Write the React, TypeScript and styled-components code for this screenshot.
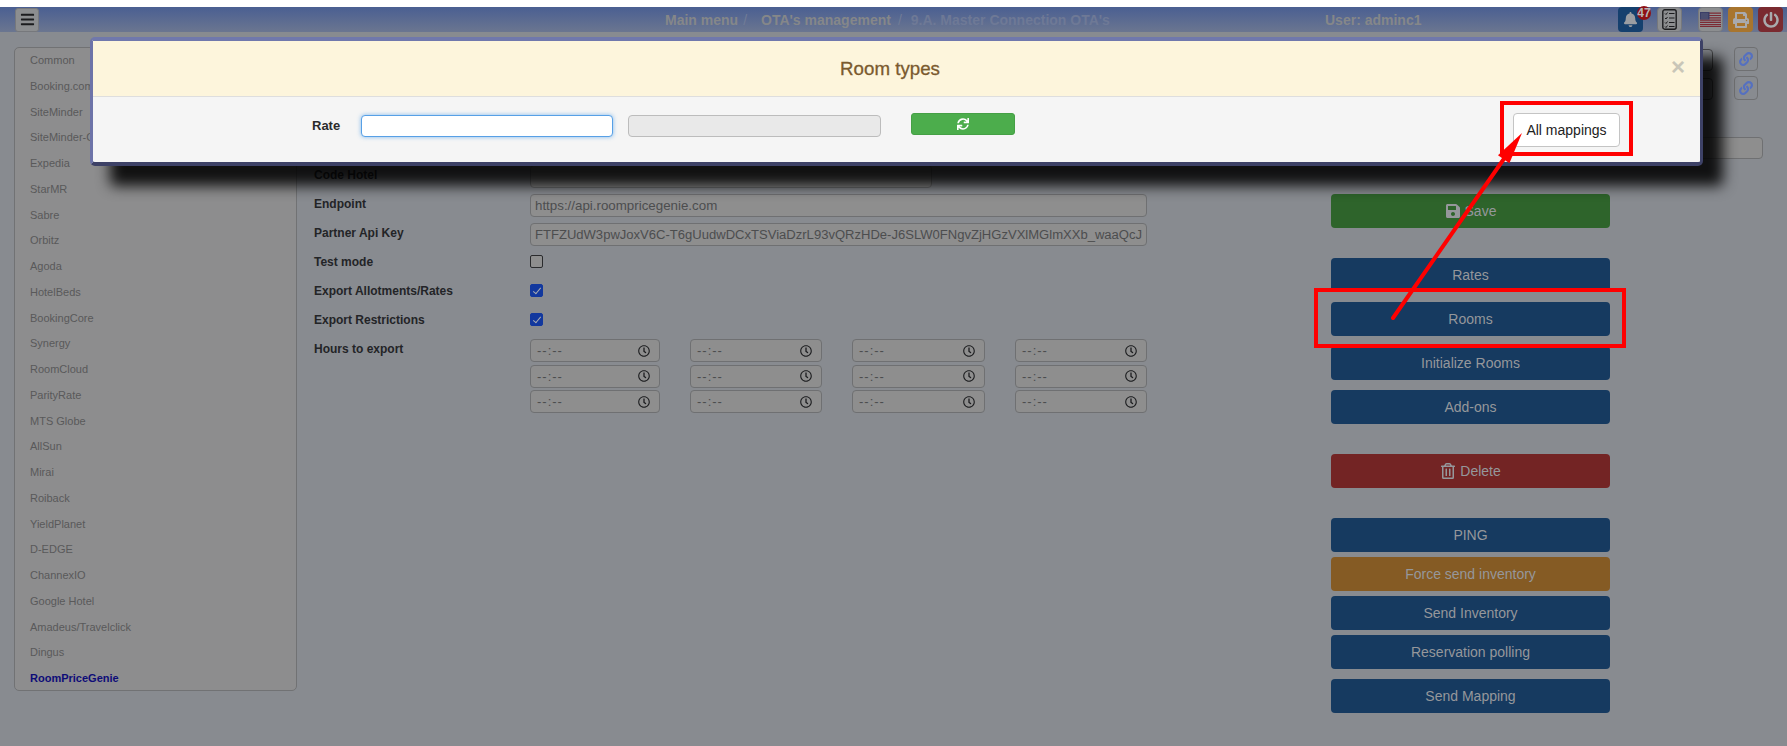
import React from 'react';
import styled, { createGlobalStyle } from 'styled-components';
import {
  FaBars,
  FaBell,
  FaLink,
  FaPowerOff,
  FaPrint,
  FaRegClock,
  FaRegTrashAlt,
  FaSave,
  FaSync,
} from 'react-icons/fa';

const CHANNELS = [
  'Common',
  'Booking.com',
  'SiteMinder',
  'SiteMinder-C',
  'Expedia',
  'StarMR',
  'Sabre',
  'Orbitz',
  'Agoda',
  'HotelBeds',
  'BookingCore',
  'Synergy',
  'RoomCloud',
  'ParityRate',
  'MTS Globe',
  'AllSun',
  'Mirai',
  'Roiback',
  'YieldPlanet',
  'D-EDGE',
  'ChannexIO',
  'Google Hotel',
  'Amadeus/Travelclick',
  'Dingus',
  'RoomPriceGenie',
];

const API_KEY =
  'FTFZUdW3pwJoxV6C-T6gUudwDCxTSViaDzrL93vQRzHDe-J6SLW0FNgvZjHGzVXlMGlmXXb_waaQcJvN2kPq';

export default function App() {
  return (
    <Page>
      <GlobalStyle />
      <TopStrip />
      <Header>
        <HeaderLeft>
          <MenuButton>
            <FaBars size={15} />
          </MenuButton>
        </HeaderLeft>
        <Breadcrumb>
          <span>Main menu</span>
          <FirstSlash>/</FirstSlash>
          <span>OTA's management</span>
          <SecondSlash>/</SecondSlash>
          <CrumbCurrent>9.A. Master Connection OTA's</CrumbCurrent>
        </Breadcrumb>
        <UserName>User: adminc1</UserName>
        <HeaderIcons>
          <BellButton>
            <FaBell size={15} />
            <Badge>47</Badge>
          </BellButton>
          <ListButton>
            <svg width="15" height="21" viewBox="0 0 15 21" fill="none" stroke="#1b1c1e">
              <rect x="0.8" y="0.8" width="13.4" height="19.4" rx="2" strokeWidth="1.4" />
              <path d="M3 4.5l1 1 1.5-2M3 9l1 1 1.5-2M3 13.5l1 1 1.5-2M3 17.5l1 1 1.5-2" strokeWidth="1" />
              <path d="M7 4.5h5.5M7 9h5.5M7 13.5h5.5M7 17.5h5.5" strokeWidth="1.2" />
            </svg>
          </ListButton>
          <FlagButton>
            <svg width="21" height="15" viewBox="0 0 21 15">
              <rect width="21" height="15" fill="#8f9094" />
              <path d="M0 1.2h21M0 3.5h21M0 5.8h21M0 8.1h21M0 10.4h21M0 12.7h21M0 14.6h21" stroke="#7c2a33" strokeWidth="1.2" />
              <rect width="9.5" height="7.5" fill="#3a3f68" />
              <path d="M1.5 2h6.5M1.5 4h6.5M1.5 6h6.5" stroke="#8f9094" strokeWidth="0.8" strokeDasharray="1 1" />
            </svg>
          </FlagButton>
          <PrintButton>
            <FaPrint size={16} />
          </PrintButton>
          <PowerButton>
            <FaPowerOff size={16} />
          </PowerButton>
        </HeaderIcons>
      </Header>

      <Content>
        <Sidebar>
          {CHANNELS.map((name) => (
            <ChannelItem key={name} $active={name === 'RoomPriceGenie'}>
              {name}
            </ChannelItem>
          ))}
        </Sidebar>

        <FormGrid>
          <FieldLabel>Code Hotel</FieldLabel>
          <FieldInput $short readOnly value="" />
          <FieldLabel>Endpoint</FieldLabel>
          <FieldInput readOnly value="https://api.roompricegenie.com" />
          <FieldLabel>Partner Api Key</FieldLabel>
          <KeyInput readOnly value={API_KEY} />
          <FieldLabel>Test mode</FieldLabel>
          <FieldCheck />
          <FieldLabel>Export Allotments/Rates</FieldLabel>
          <FieldCheck $checked>
            <CheckMark />
          </FieldCheck>
          <FieldLabel>Export Restrictions</FieldLabel>
          <FieldCheck $checked>
            <CheckMark />
          </FieldCheck>
          <FieldLabel>Hours to export</FieldLabel>
          <HoursGrid>
            {Array.from({ length: 12 }, (_, i) => (
              <TimeField key={i}>
                <span>--:--</span>
                <FaRegClock size={12} />
              </TimeField>
            ))}
          </HoursGrid>
        </FormGrid>

        <ActionsColumn>
          <LinkRow>
            <ShadowInput />
            <LinkButton>
              <FaLink size={14} />
            </LinkButton>
          </LinkRow>
          <LinkRow>
            <ShadowInput />
            <LinkButton>
              <FaLink size={14} />
            </LinkButton>
          </LinkRow>
          <WideInput />
          <ActionButton $color="#2e642b" $mt={35}>
            <FaSave size={16} /> Save
          </ActionButton>
          <ActionButton $mt={30}>Rates</ActionButton>
          <ActionButton $mt={10}>Rooms</ActionButton>
          <ActionButton $mt={10}>Initialize Rooms</ActionButton>
          <ActionButton $mt={10}>Add-ons</ActionButton>
          <ActionButton $color="#732424" $mt={30}>
            <FaRegTrashAlt size={16} /> Delete
          </ActionButton>
          <ActionButton $mt={30}>PING</ActionButton>
          <ActionButton $color="#855b24" $mt={5}>
            Force send inventory
          </ActionButton>
          <ActionButton $mt={5}>Send Inventory</ActionButton>
          <ActionButton $mt={5}>Reservation polling</ActionButton>
          <ActionButton $mt={10}>Send Mapping</ActionButton>
        </ActionsColumn>
      </Content>

      <Modal>
        <ModalHeader>
          <ModalTitle>Room types</ModalTitle>
          <CloseMark>×</CloseMark>
        </ModalHeader>
        <ModalBody>
          <RateLabel>Rate</RateLabel>
          <RateInput />
          <RateDisabled />
          <RefreshButton>
            <FaSync size={12} />
          </RefreshButton>
          <MappingsButton>All mappings</MappingsButton>
        </ModalBody>
      </Modal>

      <MappingsMark />
      <RoomsMark />
      <ArrowLayer width="1787" height="746" viewBox="0 0 1787 746">
        <path d="M1393 318L1508 153" stroke="#ff0000" strokeWidth="4" strokeLinecap="round" />
        <polygon points="1522,133 1509.4,163.2 1498,155.2" fill="#ff0000" />
      </ArrowLayer>
    </Page>
  );
}

const GlobalStyle = createGlobalStyle`
  html, body {
    margin: 0;
    padding: 0;
    background: #888b90;
  }
  * {
    box-sizing: border-box;
  }
`;

const Page = styled.div`
  position: relative;
  width: 1787px;
  height: 746px;
  overflow: hidden;
  background: #888b90;
  font-family: 'Liberation Sans', Arial, sans-serif;
`;

const TopStrip = styled.div`
  height: 7px;
  background: #ffffff;
`;

const Header = styled.header`
  display: flex;
  align-items: center;
  height: 25px;
  background: linear-gradient(#4a5f92, #6b7690);
  font-size: 14px;
  font-weight: bold;
  color: #858789;
`;

const HeaderLeft = styled.div`
  width: 665px;
  padding-left: 15px;
`;

const MenuButton = styled.div`
  display: flex;
  align-items: center;
  justify-content: center;
  width: 24px;
  height: 24px;
  background: #8c8e90;
  border: 1px solid #76787c;
  border-radius: 3px;
  color: #1b1c1e;
`;

const Breadcrumb = styled.nav`
  display: flex;
  width: 660px;
  white-space: nowrap;
`;

const FirstSlash = styled.span`
  margin: 0 14px 0 5px;
  font-weight: normal;
  color: #717c97;
`;

const SecondSlash = styled(FirstSlash)`
  margin: 0 9px 0 7px;
`;

const CrumbCurrent = styled.span`
  color: #6e7996;
`;

const UserName = styled.div`
  width: 293px;
`;

const HeaderIcons = styled.div`
  display: flex;
  align-items: center;
`;

const IconButton = styled.div`
  display: flex;
  align-items: center;
  justify-content: center;
  width: 25px;
  height: 25px;
  border-radius: 4px;
`;

const BellButton = styled(IconButton)`
  position: relative;
  margin-right: 14px;
  background: #15406e;
  color: #9a9da2;
`;

const Badge = styled.span`
  position: absolute;
  top: -1px;
  left: 19px;
  width: 14px;
  height: 14px;
  border-radius: 50%;
  background: #8e1116;
  color: #b6b6b8;
  font-size: 12px;
  line-height: 14px;
  text-align: center;
`;

const ListButton = styled(IconButton)`
  margin-right: 16px;
  background: #8c8e90;
  border: 1px solid #76787c;
`;

const FlagButton = styled(IconButton)`
  margin-right: 5px;
  background: #8c8e90;
  border: 1px solid #76787c;
`;

const PrintButton = styled(IconButton)`
  margin-right: 5px;
  background: #a8752e;
  color: #a9aaad;
`;

const PowerButton = styled(IconButton)`
  background: #7a2a30;
  color: #a9aaad;
`;

const Content = styled.main`
  display: flex;
  align-items: flex-start;
  padding: 15px 0 0 14px;
`;

const Sidebar = styled.aside`
  flex: none;
  width: 283px;
  height: 644px;
  background: #8d8d8e;
  border: 1px solid #717274;
  border-radius: 5px;
`;

const ChannelItem = styled.div<{ $active?: boolean }>`
  height: 25.75px;
  padding-left: 15px;
  font-size: 11px;
  line-height: 24.5px;
  font-weight: ${(p) => (p.$active ? 'bold' : 'normal')};
  color: ${(p) => (p.$active ? '#0d0c78' : '#59595a')};
`;

const FormGrid = styled.section`
  flex: none;
  display: grid;
  grid-template-columns: 216px 617px;
  grid-auto-rows: minmax(29px, auto);
  width: 1034px;
  padding: 117px 0 0 17px;
  align-items: start;
`;

const FieldLabel = styled.label`
  padding-top: 4px;
  font-size: 12px;
  line-height: 14px;
  font-weight: bold;
  color: #232427;
`;

const FieldInput = styled.input<{ $short?: boolean }>`
  display: block;
  width: ${(p) => (p.$short ? '402px' : '617px')};
  height: 23px;
  margin-top: 1px;
  padding: 0 4px;
  background: #8e8e8e;
  border: 1px solid #6f7072;
  border-radius: 4px;
  outline: none;
  font-family: inherit;
  font-size: 13.33px;
  color: #4c4d4e;
`;

const KeyInput = styled(FieldInput)`
  font-size: 13.05px;
`;

const FieldCheck = styled.div<{ $checked?: boolean }>`
  display: flex;
  align-items: center;
  justify-content: center;
  width: 13px;
  height: 13px;
  margin-top: 4px;
  border-radius: 2px;
  background: ${(p) => (p.$checked ? '#12389e' : '#8e8e8e')};
  border: 1px solid ${(p) => (p.$checked ? '#12389e' : '#2a2b2d')};
`;

const CheckMark = styled.span`
  width: 4px;
  height: 8px;
  margin-top: -2px;
  border-right: 1.5px solid #a9acb2;
  border-bottom: 1.5px solid #a9acb2;
  transform: rotate(40deg);
`;

const HoursGrid = styled.div`
  display: grid;
  grid-template-columns: 130px 132px 133px 132px;
  grid-auto-rows: 23px;
  column-gap: 30px;
  row-gap: 2.5px;
  margin-top: 1px;
`;

const TimeField = styled.div`
  display: flex;
  align-items: center;
  justify-content: space-between;
  padding: 0 9px 0 6px;
  background: #8e8e8e;
  border: 1px solid #6f7072;
  border-radius: 4px;
  font-size: 13px;
  letter-spacing: 1px;
  color: #4c4d4e;
  svg {
    color: #1d1e20;
  }
`;

const ActionsColumn = styled.section`
  flex: none;
  width: 432px;
`;

const LinkRow = styled.div`
  display: flex;
  align-items: flex-end;
  justify-content: space-between;
  width: 427px;
  height: 24px;
  margin-bottom: 5px;
`;

const ShadowInput = styled.div`
  width: 382px;
  height: 22px;
  border: 1px solid #4a4b4d;
  border-radius: 4px;
`;

const LinkButton = styled.div`
  display: flex;
  align-items: center;
  justify-content: center;
  width: 24px;
  height: 24px;
  border: 1px solid #6f7072;
  border-radius: 4px;
  color: #5570c0;
`;

const WideInput = styled.div`
  width: 432px;
  height: 22px;
  margin-top: 37px;
  background: #8e8e8e;
  border: 1px solid #6f7072;
  border-radius: 4px;
`;

const ActionButton = styled.div<{ $color?: string; $mt: number }>`
  display: flex;
  align-items: center;
  justify-content: center;
  gap: 4px;
  width: 279px;
  height: 34px;
  margin-top: ${(p) => p.$mt}px;
  background: ${(p) => p.$color ?? '#163a60'};
  border-radius: 4px;
  font-size: 14px;
  color: #95979b;
`;

const Modal = styled.div`
  position: absolute;
  top: 37px;
  left: 90px;
  width: 1613px;
  height: 129px;
  background: #f5f5f5;
  border-style: solid;
  border-width: 4px 3px 4px 3px;
  border-color: #7078ac #3d4166 #3d4166 #6d73a8;
  border-radius: 5px;
  box-shadow: 20px 20px 14px rgba(0, 0, 0, 0.88);
`;

const ModalHeader = styled.div`
  position: relative;
  height: 56px;
  padding-right: 13px;
  background: #fdf5dc;
  border-bottom: 1px solid #dedede;
  text-align: center;
`;

const ModalTitle = styled.h3`
  margin: 0;
  font-size: 18.72px;
  font-weight: normal;
  line-height: 56px;
  color: #7a5a2e;
  -webkit-text-stroke: 0.3px #7a5a2e;
`;

const CloseMark = styled.span`
  position: absolute;
  top: 9px;
  right: 15px;
  font-size: 24px;
  font-weight: bold;
  line-height: 34px;
  color: #c9c6b8;
`;

const ModalBody = styled.div`
  display: flex;
  align-items: flex-start;
  padding: 16px 0 0 219px;
`;

const RateLabel = styled.label`
  width: 49px;
  margin-top: 5px;
  font-size: 13px;
  line-height: 15px;
  font-weight: bold;
  color: #2b2b2b;
`;

const RateInput = styled.div`
  width: 252px;
  height: 22px;
  margin-top: 2px;
  background: #ffffff;
  border: 1px solid #57a0e6;
  border-radius: 4px;
  box-shadow: 0 0 4px rgba(80, 160, 235, 0.7);
`;

const RateDisabled = styled.div`
  width: 253px;
  height: 22px;
  margin: 2px 30px 0 15px;
  background: #e9e9e9;
  border: 1px solid #bcbcbc;
  border-radius: 4px;
`;

const RefreshButton = styled.div`
  display: flex;
  align-items: center;
  justify-content: center;
  width: 104px;
  height: 22px;
  background: #4cad4c;
  border: 1px solid #45a045;
  border-radius: 3px;
  color: #ffffff;
`;

const MappingsButton = styled.div`
  display: flex;
  align-items: center;
  justify-content: center;
  width: 107px;
  height: 34px;
  margin-left: 498px;
  background: #ffffff;
  border: 1px solid #c4c4c4;
  border-radius: 4px;
  font-size: 14px;
  color: #222222;
`;

const MappingsMark = styled.div`
  position: absolute;
  top: 101px;
  left: 1500px;
  width: 133px;
  height: 55px;
  border: 4px solid #ff0000;
`;

const RoomsMark = styled.div`
  position: absolute;
  top: 288px;
  left: 1314px;
  width: 312px;
  height: 60px;
  border: 4px solid #ff0000;
`;

const ArrowLayer = styled.svg`
  position: absolute;
  top: 0;
  left: 0;
  pointer-events: none;
`;
